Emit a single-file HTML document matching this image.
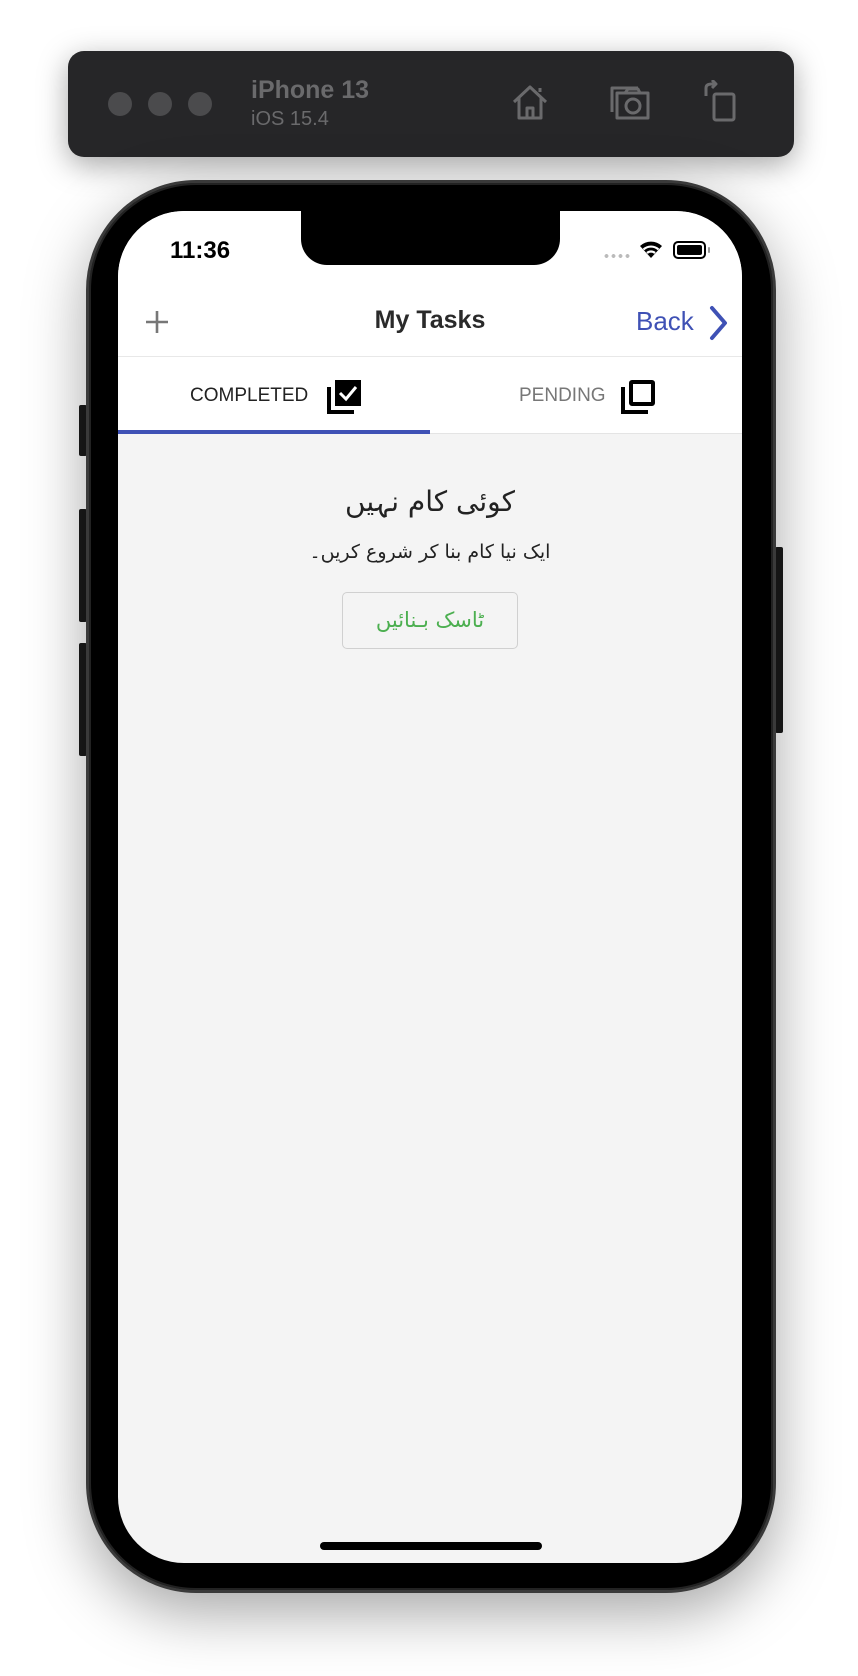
<!DOCTYPE html>
<html><head><meta charset="utf-8"><style>
*{margin:0;padding:0;box-sizing:border-box}
body{width:858px;height:1676px;background:#fff;position:relative;overflow:hidden;font-family:"Liberation Sans",sans-serif}
.abs{position:absolute}
.toolbar{left:68px;top:51px;width:726px;height:106px;background:#262628;border-radius:16px;box-shadow:0 8px 30px rgba(0,0,0,.35)}
.dot{width:24px;height:24px;border-radius:50%;background:#4b4b4d;top:92px}
.phone{left:86px;top:180px;width:690px;height:1413px;border-radius:110px;background:#000;border:3px solid #3a3a3a;box-shadow:0 20px 60px rgba(0,0,0,.35),inset 0 0 0 2px #222}
.screen{left:118px;top:211px;width:624px;height:1352px;border-radius:66px;background:#f4f4f4;overflow:hidden}
.btn{background:#1a1a1a;width:8px;border-radius:2px}
.ar{font-family:"DejaVu Sans","Noto Sans CJK SC",sans-serif}
</style></head><body>
<div class="abs toolbar"></div>
<div class="abs dot" style="left:108px"></div>
<div class="abs dot" style="left:148px"></div>
<div class="abs dot" style="left:188px"></div>
<div class="abs" style="left:251px;top:76px;color:#6a6a6c;font-weight:bold;font-size:25px">iPhone 13</div>
<div class="abs" style="left:251px;top:108px;color:#6a6a6c;font-size:20px">iOS 15.4</div>
<svg class="abs" style="left:510px;top:82px" width="40" height="40" viewBox="0 0 40 40" fill="none" stroke="#6a6a6c" stroke-width="3" stroke-linejoin="round"><path d="M4 20 L20 5 L36 20 M9 16 V36 H31 V16 M17 36 V26 H23 V36 M30 10 V6"/></svg>
<svg class="abs" style="left:608px;top:82px" width="46" height="42" viewBox="0 0 46 42" fill="none" stroke="#6a6a6c" stroke-width="3" stroke-linejoin="round"><path d="M4 30 V6 H30 M9 36 V11 H40 V36 Z M17 11 L20 7 H30 L32 11"/><circle cx="25" cy="24" r="7"/></svg>
<svg class="abs" style="left:702px;top:80px" width="36" height="44" viewBox="0 0 36 44" fill="none" stroke="#6a6a6c" stroke-width="3" stroke-linejoin="round"><rect x="12" y="14" width="20" height="26" rx="2"/><path d="M4 16 V8 Q4 4 10 4 H14 M10 0 L14 4 L10 8"/></svg>

<div class="abs btn" style="left:79px;top:405px;height:51px"></div>
<div class="abs btn" style="left:79px;top:509px;height:113px"></div>
<div class="abs btn" style="left:79px;top:643px;height:113px"></div>
<div class="abs btn" style="left:775px;top:547px;height:186px"></div>
<div class="abs phone"></div>
<div class="abs screen">
  <div class="abs" style="left:0;top:0;width:624px;height:145px;background:#fff"></div>
  <div class="abs" style="left:0;top:145px;width:624px;height:1px;background:#e8e8e8"></div>
  <div class="abs" style="left:0;top:146px;width:624px;height:77px;background:#fff;border-bottom:1px solid #e4e4e4"></div>
  <div class="abs" style="left:0;top:219px;width:312px;height:4px;background:#3f51b5"></div>
</div>
<div class="abs" style="left:301px;top:205px;width:259px;height:60px;background:#000;border-radius:0 0 26px 26px"></div>
<div class="abs" style="left:170px;top:237px;font-size:24px;font-weight:bold;color:#000">11:36</div>
<div class="abs" style="left:603px;top:254px;width:28px;height:4px;background-image:radial-gradient(circle,#bbb 1.8px,transparent 2px);background-size:7px 4px"></div>
<svg class="abs" style="left:638px;top:239px" width="26" height="20" viewBox="0 0 26 20"><path d="M13 19 L2 7 A16 16 0 0 1 24 7 Z" fill="#000"/><path d="M5.5 10.5 A11 11 0 0 1 20.5 10.5" stroke="#fff" stroke-width="2.2" fill="none"/><path d="M9 14 A6 6 0 0 1 17 14" stroke="#fff" stroke-width="2.2" fill="none"/></svg>
<div class="abs" style="left:673px;top:241px;width:33px;height:18px;border:2px solid #000;border-radius:5px;padding:2px"><div style="width:100%;height:100%;background:#000;border-radius:2px"></div></div>
<div class="abs" style="left:708px;top:247px;width:2px;height:6px;background:#999;border-radius:1px"></div>

<svg class="abs" style="left:145px;top:310px" width="24" height="24" viewBox="0 0 24 24" stroke="#777" stroke-width="2.6"><path d="M12 1 V23 M1 12 H23"/></svg>
<div class="abs" style="left:330px;top:306px;width:200px;text-align:center;font-size:25px;font-weight:bold;color:#2a2a2a">My Tasks</div>
<div class="abs" style="left:636px;top:306px;font-size:26px;color:#3f51b5">Back</div>
<svg class="abs" style="left:707px;top:305px" width="22" height="36" viewBox="0 0 22 36" fill="none" stroke="#3f51b5" stroke-width="4" stroke-linecap="round" stroke-linejoin="round"><path d="M5 3 L18 18 L5 33"/></svg>

<div class="abs" style="left:190px;top:385px;font-size:19px;color:#222">COMPLETED</div>
<svg class="abs" style="left:327px;top:378px" width="36" height="36" viewBox="0 0 36 36"><path d="M2 9 V34 H27" fill="none" stroke="#000" stroke-width="4"/><rect x="8" y="2" width="26" height="26" fill="#000"/><path d="M13 15 L19 21 L29 9" fill="none" stroke="#fff" stroke-width="3"/></svg>
<div class="abs" style="left:519px;top:385px;font-size:19px;color:#777">PENDING</div>
<svg class="abs" style="left:621px;top:378px" width="36" height="36" viewBox="0 0 36 36" fill="none" stroke="#000" stroke-width="4"><path d="M2 9 V34 H27"/><rect x="10" y="4" width="22" height="22" rx="1"/></svg>

<div class="abs ar" style="left:230px;top:485px;width:400px;text-align:center;font-size:28px;font-weight:500;color:#222" dir="rtl">کوئی کام نہیں</div>
<div class="abs ar" style="left:230px;top:541px;width:400px;text-align:center;font-size:19px;color:#222" dir="rtl">ایک نیا کام بنا کر شروع کریں۔</div>
<div class="abs ar" style="left:342px;top:592px;width:176px;height:57px;border:1px solid #d0d0d0;border-radius:5px;text-align:center;line-height:55px;font-size:21px;color:#4caf50" dir="rtl">ٹاسک بـنائیں</div>

<div class="abs" style="left:320px;top:1542px;width:222px;height:8px;background:#000;border-radius:4px"></div>
</body></html>
